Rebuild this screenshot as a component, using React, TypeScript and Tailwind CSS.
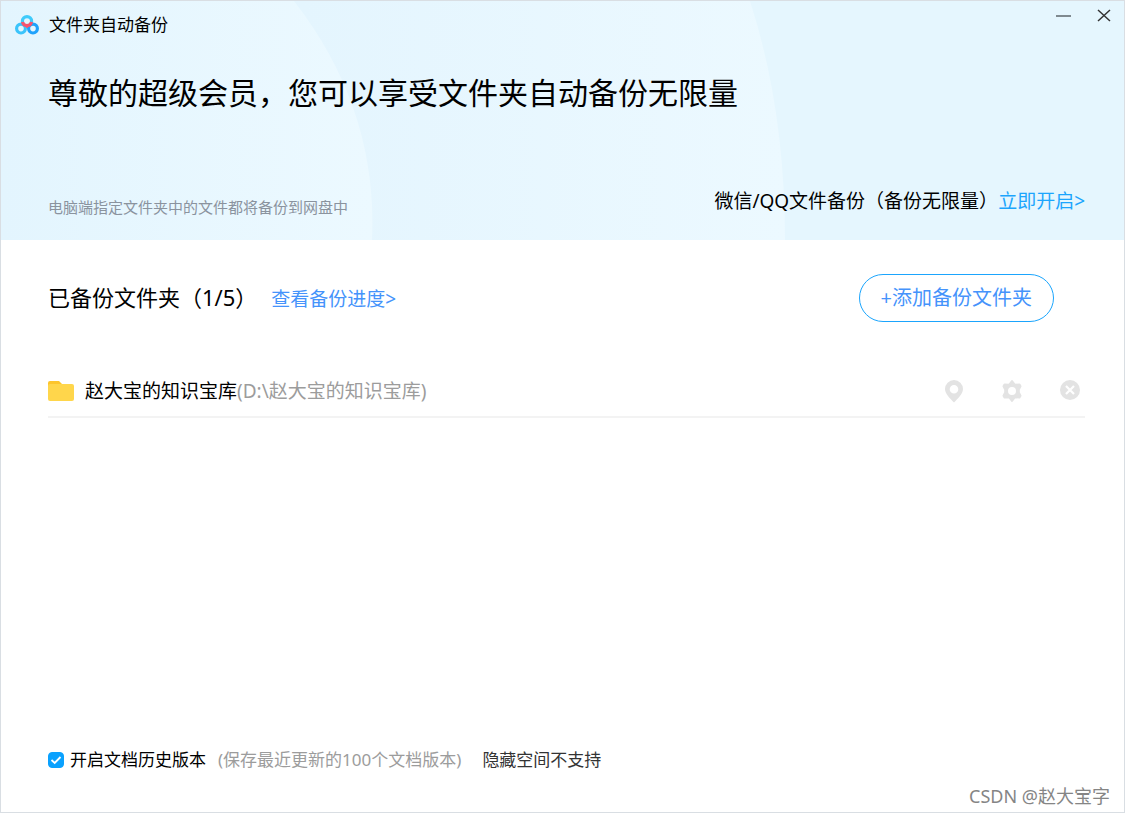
import { useState } from "react";

const folders = [
	{ name: "赵大宝的知识宝库", path: "(D:\\赵大宝的知识宝库)" },
];

function Logo() {
	return (
		<svg className="w-6 h-5 shrink-0" viewBox="0 0 24 20" fill="none" strokeWidth="3.2">
			<circle cx="12" cy="6.2" r="4.6" stroke="#3fcbfb" />
			<circle cx="6" cy="13.6" r="4.4" stroke="#3bc4fb" />
			<circle cx="18" cy="13.6" r="4.4" stroke="#1fa2fc" />
			<path d="M7.500 7a4.600 4.600 0 0 0 9 0" stroke="#f8536f" />
			<path d="M9.500 9.600L12 11.800l2.500-2.200" stroke="#f8536f" strokeWidth="2" />
		</svg>
	);
}

function BannerArt() {
	return (
		<svg className="absolute inset-0 w-full h-full" viewBox="0 0 1123 239" preserveAspectRatio="none">
			<defs>
				<linearGradient id="arcLeft" x1="0" y1="0" x2="372" y2="0" gradientUnits="userSpaceOnUse">
					<stop offset="0" stopColor="#e3f5fe" />
					<stop offset="1" stopColor="#ecf9ff" />
				</linearGradient>
				<linearGradient id="arcMiddle" x1="300" y1="0" x2="784" y2="0" gradientUnits="userSpaceOnUse">
					<stop offset="0" stopColor="#e4f5fe" />
					<stop offset="1" stopColor="#ecf9ff" />
				</linearGradient>
			</defs>
			<rect width="1123" height="239" fill="#e5f6fe" />
			<path d="M0 0H749Q784 108 784 239H0z" fill="url(#arcMiddle)" />
			<path d="M0 0H293Q377 108 371 239H0z" fill="url(#arcLeft)" />
		</svg>
	);
}

function PinIcon() {
	return (
		<svg className="w-5 h-6" viewBox="0 0 20 24" fill="#e3e3e3">
			<path fillRule="evenodd" d="M10 1a9 9 0 0 1 9 9c0 4.600-5 9.500-9 13.500C6 19.500 1 14.600 1 10a9 9 0 0 1 9-9zm0 5a4.300 4.300 0 1 0 0 8.600A4.300 4.300 0 0 0 10 6z" />
		</svg>
	);
}

function GearIcon() {
	return (
		<svg className="w-5 h-6" viewBox="0 0 20 24" fill="#e3e3e3" stroke="#e3e3e3" strokeWidth="2" strokeLinejoin="round">
			<path fillRule="evenodd" d="M10 2l2.300 3.200 1.200.6 4-.4 1 1.800-1.700 3.400v2.800l1.700 3.400-1 1.800-4-.4-1.200.6L10 22l-2.300-3.200-1.200-.6-4 .4-1-1.800 1.700-3.400v-2.800L1.500 7.200l1-1.800 4 .4 1.200-.6zM10 7a5 5 0 1 0 0 10 5 5 0 0 0 0-10z" />
		</svg>
	);
}

function RemoveIcon() {
	return (
		<svg className="w-5 h-6" viewBox="0 0 20 24">
			<circle cx="10" cy="11" r="10" fill="#e3e3e3" />
			<path d="M6 7l8 8M14 7l-8 8" stroke="#fff" strokeWidth="2.200" />
		</svg>
	);
}

export default function App() {
	const [history, setHistory] = useState<boolean>(true);

	return (
		<div className="min-h-screen flex flex-col border border-[#d9dee3] bg-white text-black font-['Noto_Sans','Noto_Sans_CJK_SC',sans-serif]">
			<header className="relative pb-[21px]">
				<BannerArt />
				<div className="relative flex items-start justify-between pl-3.5 pr-2">
					<div className="flex items-center gap-2.5 pt-3">
						<Logo />
						<h1 className="text-[17px] leading-6">文件夹自动备份</h1>
					</div>
					<div className="flex gap-4 pt-0.5">
						<button aria-label="最小化" className="w-6 h-6 flex items-center justify-center">
							<svg className="w-4 h-4" viewBox="0 0 16 16" stroke="#7f8a90" strokeWidth="2"><path d="M0 9h15" /></svg>
						</button>
						<button aria-label="关闭" className="w-6 h-6 flex items-center justify-center">
							<svg className="w-4 h-4" viewBox="0 0 16 16" stroke="#333" strokeWidth="1.500"><path d="M2 3l12 11M14 3L2 14" /></svg>
						</button>
					</div>
				</div>
				<div className="relative pl-[47px] pr-[39px]">
					<h2 className="pt-9 text-[30px] leading-10">尊敬的超级会员，您可以享受文件夹自动备份无限量</h2>
					<div className="flex justify-between pt-[74px]">
						<p className="pt-2 text-[15px] leading-6 text-[#8a939e]">电脑端指定文件夹中的文件都将备份到网盘中</p>
						<p className="text-[19px] leading-7">
							<span>微信/QQ文件备份（备份无限量）</span>
							<a href="#wechat" className="text-[#1ba5fd]">立即开启&gt;</a>
						</p>
					</div>
				</div>
			</header>
			<main className="flex-1 pl-[47px] pr-[39px] pt-[34px]">
				<div className="flex items-center justify-between pr-[31px]">
					<div className="flex items-baseline gap-3.5">
						<h3 className="text-[22px] leading-8">已备份文件夹（1/5）</h3>
						<a href="#progress" className="text-[19px] leading-8 text-[#4593fb]">查看备份进度&gt;</a>
					</div>
					<button className="h-12 px-[21px] rounded-full border border-[#1ba5fd] text-[20px] text-[#4593fb]">+添加备份文件夹</button>
				</div>
				<ul className="pt-11">
					{folders.map((folder) => (
						<li key={folder.name} className="flex items-center justify-between h-13 border-b-2 border-[#f3f3f3]">
							<div className="flex items-center gap-[11px]">
								<svg className="w-[26px] h-5" viewBox="0 0 26 20">
									<path d="M0 2a2 2 0 0 1 2-2h9l3 3v6H0z" fill="#fdc52c" />
									<rect y="3" width="26" height="17" rx="2" fill="#ffd64b" />
								</svg>
								<p className="text-[19px] leading-7">
									{folder.name}<span className="text-[#9c9c9c]">{folder.path}</span>
								</p>
							</div>
							<div className="flex items-center gap-[38px] pr-[5px]">
								<button aria-label="打开位置"><PinIcon /></button>
								<button aria-label="设置"><GearIcon /></button>
								<button aria-label="移除"><RemoveIcon /></button>
							</div>
						</li>
					))}
				</ul>
			</main>
			<footer>
				<div className="flex items-center gap-[21px] pl-[47px] text-[17px] leading-7">
					<div className="flex items-center gap-3">
						<label className="flex items-center gap-1.5">
							<span className="relative flex">
								<input
									type="checkbox"
									checked={history}
									onChange={(e) => setHistory(e.target.checked)}
									className="peer appearance-none w-4 h-4 rounded-sm border border-[#0aa1fe] checked:bg-[#0aa1fe]"
								/>
								<svg className="absolute inset-0 hidden peer-checked:block pointer-events-none" viewBox="0 0 16 16" fill="none" stroke="#fff" strokeWidth="1.800">
									<path d="M3.500 8l3.200 3L12.500 5" />
								</svg>
							</span>
							开启文档历史版本
						</label>
						<span className="text-[#9c9c9c]">(保存最近更新的100个文档版本)</span>
					</div>
					<span className="text-[#333]">隐藏空间不支持</span>
				</div>
				<p className="pt-2.5 pr-3.5 pb-1 text-right text-[18px] leading-6 text-[#858585]">CSDN @赵大宝字</p>
			</footer>
		</div>
	);
}
